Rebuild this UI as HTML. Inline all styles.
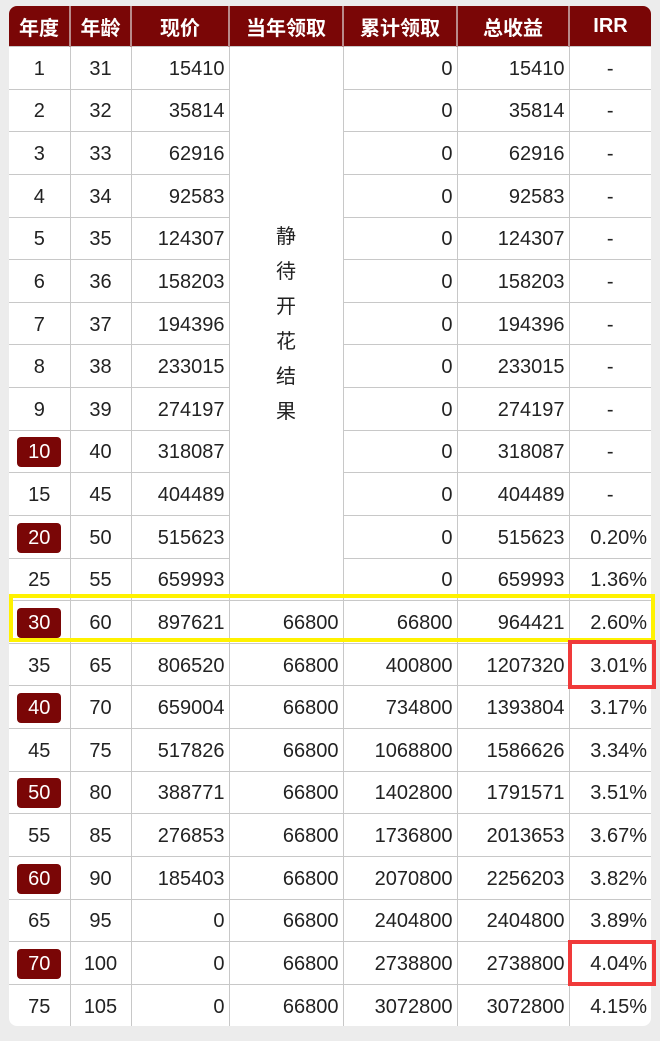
<!DOCTYPE html>
<html><head><meta charset="utf-8"><style>
html,body{margin:0;padding:0;background:#ececec;width:660px;height:1041px;overflow:hidden;position:relative}
.wrap{position:absolute;left:9px;top:6px;width:642px;height:1020px;background:#fff;border-radius:8px;overflow:hidden}
table{border-collapse:collapse;table-layout:fixed;width:642px;font-family:"Liberation Sans","Noto Sans CJK SC",sans-serif;font-size:20px;color:#222}
th{background:#7a0606;color:#fff;height:40px;font-weight:bold;font-size:20px;border-right:2px solid #b98a8a;padding:0}
th:last-child{border-right:none}
td{height:39.63px;padding:2px 4px 0 4px;border:1px solid #c8c8c8;text-align:right;line-height:20px;box-sizing:content-box}
tr td:first-child{border-left:none;text-align:center}
tr td:nth-child(2){text-align:center}
tr td:last-child{border-right:none}
tr:last-child td{border-bottom:none}
td.c{text-align:center}
.b{display:inline-block;background:#7a0606;color:#fff;width:44px;height:30px;line-height:30px;border-radius:4px}
.v{text-align:center;vertical-align:middle;line-height:35px;font-size:20px}
.box{position:absolute;box-sizing:border-box}
</style></head><body>
<div class="wrap"><table>
<colgroup><col style="width:61px"><col style="width:61px"><col style="width:98px"><col style="width:114px"><col style="width:114px"><col style="width:112px"><col style="width:82px"></colgroup>
<tr><th>年度</th><th>年龄</th><th>现价</th><th>当年领取</th><th>累计领取</th><th>总收益</th><th>IRR</th></tr>
<tr><td>1</td><td>31</td><td>15410</td><td rowspan="13" class="v">静<br>待<br>开<br>花<br>结<br>果</td><td>0</td><td>15410</td><td class="c">-</td></tr>
<tr><td>2</td><td>32</td><td>35814</td><td>0</td><td>35814</td><td class="c">-</td></tr>
<tr><td>3</td><td>33</td><td>62916</td><td>0</td><td>62916</td><td class="c">-</td></tr>
<tr><td>4</td><td>34</td><td>92583</td><td>0</td><td>92583</td><td class="c">-</td></tr>
<tr><td>5</td><td>35</td><td>124307</td><td>0</td><td>124307</td><td class="c">-</td></tr>
<tr><td>6</td><td>36</td><td>158203</td><td>0</td><td>158203</td><td class="c">-</td></tr>
<tr><td>7</td><td>37</td><td>194396</td><td>0</td><td>194396</td><td class="c">-</td></tr>
<tr><td>8</td><td>38</td><td>233015</td><td>0</td><td>233015</td><td class="c">-</td></tr>
<tr><td>9</td><td>39</td><td>274197</td><td>0</td><td>274197</td><td class="c">-</td></tr>
<tr><td><span class="b">10</span></td><td>40</td><td>318087</td><td>0</td><td>318087</td><td class="c">-</td></tr>
<tr><td>15</td><td>45</td><td>404489</td><td>0</td><td>404489</td><td class="c">-</td></tr>
<tr><td><span class="b">20</span></td><td>50</td><td>515623</td><td>0</td><td>515623</td><td>0.20%</td></tr>
<tr><td>25</td><td>55</td><td>659993</td><td>0</td><td>659993</td><td>1.36%</td></tr>
<tr><td><span class="b">30</span></td><td>60</td><td>897621</td><td>66800</td><td>66800</td><td>964421</td><td>2.60%</td></tr>
<tr><td>35</td><td>65</td><td>806520</td><td>66800</td><td>400800</td><td>1207320</td><td>3.01%</td></tr>
<tr><td><span class="b">40</span></td><td>70</td><td>659004</td><td>66800</td><td>734800</td><td>1393804</td><td>3.17%</td></tr>
<tr><td>45</td><td>75</td><td>517826</td><td>66800</td><td>1068800</td><td>1586626</td><td>3.34%</td></tr>
<tr><td><span class="b">50</span></td><td>80</td><td>388771</td><td>66800</td><td>1402800</td><td>1791571</td><td>3.51%</td></tr>
<tr><td>55</td><td>85</td><td>276853</td><td>66800</td><td>1736800</td><td>2013653</td><td>3.67%</td></tr>
<tr><td><span class="b">60</span></td><td>90</td><td>185403</td><td>66800</td><td>2070800</td><td>2256203</td><td>3.82%</td></tr>
<tr><td>65</td><td>95</td><td>0</td><td>66800</td><td>2404800</td><td>2404800</td><td>3.89%</td></tr>
<tr><td><span class="b">70</span></td><td>100</td><td>0</td><td>66800</td><td>2738800</td><td>2738800</td><td>4.04%</td></tr>
<tr><td>75</td><td>105</td><td>0</td><td>66800</td><td>3072800</td><td>3072800</td><td>4.15%</td></tr>
</table></div>
<div class="box" style="left:9px;top:594px;width:646px;height:48px;border:4px solid #fff200"></div>
<div class="box" style="left:568px;top:640px;width:88px;height:49px;border:4px solid #f03a3a"></div>
<div class="box" style="left:568px;top:940px;width:88px;height:46px;border:4px solid #f03a3a"></div>
</body></html>
